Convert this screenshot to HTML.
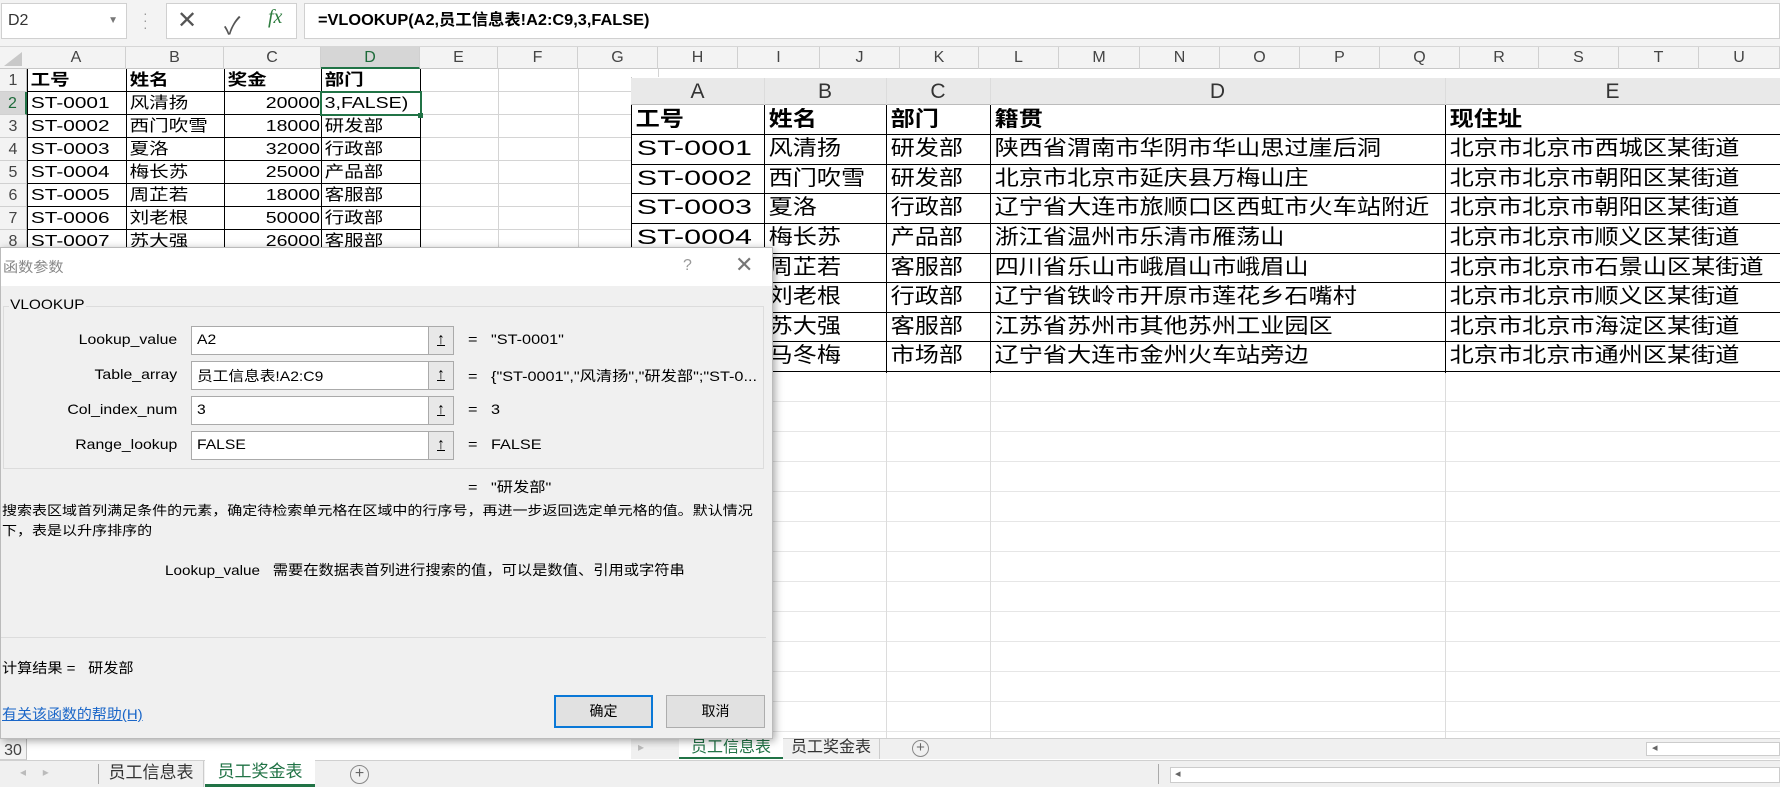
<!DOCTYPE html>
<html><head><meta charset="utf-8">
<style>
*{margin:0;padding:0;box-sizing:border-box}
body{width:1780px;height:787px;overflow:hidden;background:#fff;position:relative;font-family:"Liberation Sans","Noto Sans CJK SC",sans-serif;color:#000}
.a{position:absolute}
.ch{position:absolute;top:47px;height:22px;font-size:16px;color:#444;text-align:center;line-height:22px;border-right:1px solid #d0d0d0}
.vl{position:absolute;width:1px;background:#d4d4d4}
.cell{position:absolute;height:23px;font-size:16px;line-height:23px;padding-left:3px;white-space:nowrap;transform:scaleX(1.22);transform-origin:left}
.cell.l{transform:scaleX(1.3)}
.cell.r{transform-origin:right;text-align:right;padding-left:0}
.rh{position:absolute;left:0;width:27px;height:23px;font-size:16px;color:#444;text-align:center;line-height:23px;background:#f3f3f3;border-bottom:1px solid #d0d0d0;border-right:1px solid #c0c0c0}
.pt{position:absolute;font-size:21px;line-height:29px;padding-left:4px;white-space:nowrap;transform:scaleX(1.15);transform-origin:left}
.pt.l{transform:scaleX(1.45)}
.ph{position:absolute;font-size:21px;line-height:29px;text-align:center;color:#333}
.lbl{position:absolute;right:595px;font-size:14px;white-space:nowrap;transform:scaleX(1.13);transform-origin:right}
.inp{position:absolute;left:190px;width:263px;height:29px;background:#fff;border:1px solid #aaa}
.inp span{position:absolute;left:5px;top:4px;font-size:14px;white-space:nowrap;transform:scaleX(1.12);transform-origin:left}
.inp .b{position:absolute;right:-1px;top:-1px;width:26px;height:29px;border:1px solid #aaa;background:#e8e8e8;text-align:center;font-size:16px;line-height:26px;font-weight:bold;text-decoration:underline}
.eq{position:absolute;left:467px;font-size:14px;white-space:nowrap;transform:scaleX(1.16);transform-origin:left}
.sx{white-space:nowrap;transform:scaleX(1.08);transform-origin:left}
</style></head><body>
<div class="a" style="left:0;top:0;width:1780px;height:47px;background:#f3f3f3;border-bottom:1px solid #d6d6d6"></div>
<div class="a" style="left:1px;top:3px;width:126px;height:36px;background:#fff;border:1px solid #d0d0d0;font-size:16px;line-height:34px;padding-left:6px;color:#333">D2<span style="position:absolute;right:8px;top:0;font-size:10px;color:#777">▼</span></div>
<div class="a" style="left:143px;top:10px;color:#999;font-size:14px;line-height:7px">·<br>·<br>·</div>
<div class="a" style="left:166px;top:3px;width:131px;height:36px;background:#fff;border:1px solid #d0d0d0"></div>
<div class="a" style="left:177px;top:6px;font-size:24px;color:#555">✕</div>
<div class="a" style="left:224px;top:6px;font-size:24px;color:#555">✓</div>
<div class="a" style="left:268px;top:6px;font-size:20px;color:#2f7d40;font-style:italic;font-family:'Liberation Serif',serif">fx</div>
<div class="a" style="left:304px;top:3px;width:1476px;height:36px;background:#fff;border:1px solid #d0d0d0"></div>
<div class="a" style="left:318px;top:4px;font-size:16px;line-height:34px;font-weight:bold;white-space:nowrap;transform:scaleX(1.02);transform-origin:left">=VLOOKUP(A2,员工信息表!A2:C9,3,FALSE)</div>

<div class="a" style="left:0;top:47px;width:1780px;height:22px;background:#f3f3f3;border-bottom:1px solid #c8c8c8"></div>
<div class="a" style="left:4px;top:52px;width:0;height:0;border-left:18px solid transparent;border-bottom:14px solid #c8c8c8"></div>
<div class="ch" style="left:27px;width:99px">A</div>
<div class="ch" style="left:126px;width:98px">B</div>
<div class="ch" style="left:224px;width:97px">C</div>
<div class="ch" style="left:321px;width:99px;background:#d6d6d6;color:#1d6b3a;border-bottom:2px solid #217346">D</div>
<div class="ch" style="left:420px;width:78px">E</div>
<div class="ch" style="left:498px;width:80px">F</div>
<div class="ch" style="left:578px;width:80px">G</div>
<div class="ch" style="left:658px;width:80px">H</div>
<div class="ch" style="left:738px;width:82px">I</div>
<div class="ch" style="left:820px;width:80px">J</div>
<div class="ch" style="left:900px;width:79px">K</div>
<div class="ch" style="left:979px;width:80px">L</div>
<div class="ch" style="left:1059px;width:81px">M</div>
<div class="ch" style="left:1140px;width:80px">N</div>
<div class="ch" style="left:1220px;width:80px">O</div>
<div class="ch" style="left:1300px;width:80px">P</div>
<div class="ch" style="left:1380px;width:80px">Q</div>
<div class="ch" style="left:1460px;width:79px">R</div>
<div class="ch" style="left:1539px;width:80px">S</div>
<div class="ch" style="left:1619px;width:80px">T</div>
<div class="ch" style="left:1699px;width:81px">U</div>

<div class="a" style="left:27px;top:69px;width:1753px;height:670px;background:repeating-linear-gradient(to bottom,transparent 0,transparent 22px,#d4d4d4 22px,#d4d4d4 23px)"></div>
<div class="vl" style="left:126px;top:69px;height:670px"></div>
<div class="vl" style="left:224px;top:69px;height:670px"></div>
<div class="vl" style="left:321px;top:69px;height:670px"></div>
<div class="vl" style="left:420px;top:69px;height:670px"></div>
<div class="vl" style="left:498px;top:69px;height:670px"></div>
<div class="vl" style="left:578px;top:69px;height:670px"></div>
<div class="vl" style="left:658px;top:69px;height:670px"></div>

<div class="rh" style="top:69px">1</div>
<div class="rh" style="top:92px;background:#d6d6d6;color:#1d6b3a;border-right:2px solid #217346">2</div>
<div class="rh" style="top:115px">3</div>
<div class="rh" style="top:138px">4</div>
<div class="rh" style="top:161px">5</div>
<div class="rh" style="top:184px">6</div>
<div class="rh" style="top:207px">7</div>
<div class="rh" style="top:230px">8</div>

<div class="a" style="left:27px;top:69px;width:394px;height:180px;border-left:1px solid #000;background:
linear-gradient(#000,#000) 0 22px/100% 1px no-repeat,linear-gradient(#000,#000) 0 45px/100% 1px no-repeat,linear-gradient(#000,#000) 0 68px/100% 1px no-repeat,linear-gradient(#000,#000) 0 91px/100% 1px no-repeat,linear-gradient(#000,#000) 0 114px/100% 1px no-repeat,linear-gradient(#000,#000) 0 137px/100% 1px no-repeat,linear-gradient(#000,#000) 0 160px/100% 1px no-repeat,
linear-gradient(#000,#000) 98px 0/1px 100% no-repeat,linear-gradient(#000,#000) 196px 0/1px 100% no-repeat,linear-gradient(#000,#000) 293px 0/1px 100% no-repeat,linear-gradient(#000,#000) 392px 0/1px 100% no-repeat,#fff"></div>
<div class="cell" style="left:27px;top:69px;font-weight:bold">工号</div>
<div class="cell" style="left:126px;top:69px;font-weight:bold">姓名</div>
<div class="cell" style="left:224px;top:69px;font-weight:bold">奖金</div>
<div class="cell" style="left:321px;top:69px;font-weight:bold">部门</div>
<div class="cell l" style="left:27px;top:92px">ST-0001</div><div class="cell" style="left:126px;top:92px">风清扬</div><div class="cell r" style="left:224px;top:92px;width:96px">20000</div><div class="cell" style="left:321px;top:92px">3,FALSE)</div>
<div class="cell l" style="left:27px;top:115px">ST-0002</div><div class="cell" style="left:126px;top:115px">西门吹雪</div><div class="cell r" style="left:224px;top:115px;width:96px">18000</div><div class="cell" style="left:321px;top:115px">研发部</div>
<div class="cell l" style="left:27px;top:138px">ST-0003</div><div class="cell" style="left:126px;top:138px">夏洛</div><div class="cell r" style="left:224px;top:138px;width:96px">32000</div><div class="cell" style="left:321px;top:138px">行政部</div>
<div class="cell l" style="left:27px;top:161px">ST-0004</div><div class="cell" style="left:126px;top:161px">梅长苏</div><div class="cell r" style="left:224px;top:161px;width:96px">25000</div><div class="cell" style="left:321px;top:161px">产品部</div>
<div class="cell l" style="left:27px;top:184px">ST-0005</div><div class="cell" style="left:126px;top:184px">周芷若</div><div class="cell r" style="left:224px;top:184px;width:96px">18000</div><div class="cell" style="left:321px;top:184px">客服部</div>
<div class="cell l" style="left:27px;top:207px">ST-0006</div><div class="cell" style="left:126px;top:207px">刘老根</div><div class="cell r" style="left:224px;top:207px;width:96px">50000</div><div class="cell" style="left:321px;top:207px">行政部</div>
<div class="cell l" style="left:27px;top:230px">ST-0007</div><div class="cell" style="left:126px;top:230px">苏大强</div><div class="cell r" style="left:224px;top:230px;width:96px">26000</div><div class="cell" style="left:321px;top:230px">客服部</div>
<div class="a" style="left:320px;top:91px;width:102px;height:25px;border:2px solid #217346"></div>
<div class="a" style="left:418px;top:113px;width:5px;height:5px;background:#217346"></div>

<div class="a" style="left:631px;top:77px;width:1149px;height:662px;background:#fff;border-left:1px solid #c8c8c8"></div>
<div class="a" style="left:631px;top:78px;width:1149px;height:27px;background:#e9e9e9;border-bottom:1px solid #bbb"></div>
<div class="a" style="left:631px;top:372px;width:1149px;height:367px;background:repeating-linear-gradient(to bottom,transparent 0,transparent 29px,#e6e6e6 29px,#e6e6e6 30px)"></div>
<div class="a" style="left:764px;top:78px;width:1px;height:661px;background:#dcdcdc"></div>
<div class="a" style="left:886px;top:78px;width:1px;height:661px;background:#dcdcdc"></div>
<div class="a" style="left:990px;top:78px;width:1px;height:661px;background:#dcdcdc"></div>
<div class="a" style="left:1445px;top:78px;width:1px;height:661px;background:#dcdcdc"></div>
<div class="ph" style="left:631px;top:77px;width:133px">A</div>
<div class="ph" style="left:764px;top:77px;width:122px">B</div>
<div class="ph" style="left:886px;top:77px;width:104px">C</div>
<div class="ph" style="left:990px;top:77px;width:455px">D</div>
<div class="ph" style="left:1445px;top:77px;width:335px">E</div>
<div class="a" style="left:631px;top:105px;width:1149px;height:268px;border-left:1px solid #000;background:
linear-gradient(#000,#000) 0 29px/100% 1px no-repeat,linear-gradient(#000,#000) 0 59px/100% 1px no-repeat,linear-gradient(#000,#000) 0 88px/100% 1px no-repeat,linear-gradient(#000,#000) 0 118px/100% 1px no-repeat,linear-gradient(#000,#000) 0 148px/100% 1px no-repeat,linear-gradient(#000,#000) 0 177px/100% 1px no-repeat,linear-gradient(#000,#000) 0 207px/100% 1px no-repeat,linear-gradient(#000,#000) 0 236px/100% 1px no-repeat,linear-gradient(#000,#000) 0 266px/100% 1px no-repeat,
linear-gradient(#000,#000) 132px 0/1px 100% no-repeat,linear-gradient(#000,#000) 254px 0/1px 100% no-repeat,linear-gradient(#000,#000) 358px 0/1px 100% no-repeat,linear-gradient(#000,#000) 813px 0/1px 100% no-repeat,#fff"></div>
<div class="pt" style="left:631px;top:105px;font-weight:bold">工号</div><div class="pt" style="left:764px;top:105px;font-weight:bold">姓名</div><div class="pt" style="left:886px;top:105px;font-weight:bold">部门</div><div class="pt" style="left:990px;top:105px;font-weight:bold">籍贯</div><div class="pt" style="left:1445px;top:105px;font-weight:bold">现住址</div>
<div class="pt l" style="left:631px;top:134px">ST-0001</div><div class="pt" style="left:764px;top:134px">风清扬</div><div class="pt" style="left:886px;top:134px">研发部</div><div class="pt" style="left:990px;top:134px">陕西省渭南市华阴市华山思过崖后洞</div><div class="pt" style="left:1445px;top:134px">北京市北京市西城区某街道</div>
<div class="pt l" style="left:631px;top:164px">ST-0002</div><div class="pt" style="left:764px;top:164px">西门吹雪</div><div class="pt" style="left:886px;top:164px">研发部</div><div class="pt" style="left:990px;top:164px">北京市北京市延庆县万梅山庄</div><div class="pt" style="left:1445px;top:164px">北京市北京市朝阳区某街道</div>
<div class="pt l" style="left:631px;top:193px">ST-0003</div><div class="pt" style="left:764px;top:193px">夏洛</div><div class="pt" style="left:886px;top:193px">行政部</div><div class="pt" style="left:990px;top:193px">辽宁省大连市旅顺口区西虹市火车站附近</div><div class="pt" style="left:1445px;top:193px">北京市北京市朝阳区某街道</div>
<div class="pt l" style="left:631px;top:223px">ST-0004</div><div class="pt" style="left:764px;top:223px">梅长苏</div><div class="pt" style="left:886px;top:223px">产品部</div><div class="pt" style="left:990px;top:223px">浙江省温州市乐清市雁荡山</div><div class="pt" style="left:1445px;top:223px">北京市北京市顺义区某街道</div>
<div class="pt" style="left:764px;top:253px">周芷若</div><div class="pt" style="left:886px;top:253px">客服部</div><div class="pt" style="left:990px;top:253px">四川省乐山市峨眉山市峨眉山</div><div class="pt" style="left:1445px;top:253px">北京市北京市石景山区某街道</div>
<div class="pt" style="left:764px;top:282px">刘老根</div><div class="pt" style="left:886px;top:282px">行政部</div><div class="pt" style="left:990px;top:282px">辽宁省铁岭市开原市莲花乡石嘴村</div><div class="pt" style="left:1445px;top:282px">北京市北京市顺义区某街道</div>
<div class="pt" style="left:764px;top:312px">苏大强</div><div class="pt" style="left:886px;top:312px">客服部</div><div class="pt" style="left:990px;top:312px">江苏省苏州市其他苏州工业园区</div><div class="pt" style="left:1445px;top:312px">北京市北京市海淀区某街道</div>
<div class="pt" style="left:764px;top:341px">马冬梅</div><div class="pt" style="left:886px;top:341px">市场部</div><div class="pt" style="left:990px;top:341px">辽宁省大连市金州火车站旁边</div><div class="pt" style="left:1445px;top:341px">北京市北京市通州区某街道</div>

<div class="a" style="left:631px;top:738px;width:1149px;height:21px;background:#f0f0f0;border-top:1px solid #d0d0d0"></div>
<div class="a" style="left:638px;top:740px;font-size:12px;color:#bbb">▸</div>
<div class="a" style="left:679px;top:738px;width:104px;height:21px;background:#fff;border-bottom:2px solid #217346;color:#217346;font-size:16px;text-align:center;line-height:19px">员工信息表</div>
<div class="a" style="left:783px;top:738px;width:97px;height:21px;border-right:1px solid #ccc;font-size:16px;text-align:center;line-height:19px;color:#333">员工奖金表</div>
<div class="a" style="left:912px;top:740px;width:17px;height:17px;border:1px solid #888;border-radius:50%;font-size:15px;line-height:14px;text-align:center;color:#666">+</div>
<div class="a" style="left:1646px;top:742px;width:134px;height:14px;background:#fff;border:1px solid #ccc"></div>
<div class="a" style="left:1652px;top:741px;font-size:11px;color:#666">◂</div>

<div class="rh" style="top:739px;height:21px">30</div>

<div class="a" style="left:0;top:760px;width:1780px;height:27px;background:#f0f0f0;border-top:1px solid #d0d0d0"></div>
<div class="a" style="left:20px;top:765px;font-size:12px;color:#bbb">◂&nbsp;&nbsp;&nbsp;&nbsp;&nbsp;▸</div>
<div class="a" style="left:98px;top:764px;width:1px;height:20px;background:#aaa"></div>
<div class="a" style="left:99px;top:761px;width:105px;height:26px;font-size:17px;text-align:center;line-height:24px;color:#333;border-right:1px solid #ccc">员工信息表</div>
<div class="a" style="left:205px;top:760px;width:110px;height:27px;background:#fff;color:#217346;font-size:17px;text-align:center;line-height:24px;border-bottom:3px solid #217346">员工奖金表</div>
<div class="a" style="left:350px;top:765px;width:19px;height:19px;border:1px solid #888;border-radius:50%;font-size:16px;line-height:16px;text-align:center;color:#666">+</div>
<div class="a" style="left:1158px;top:764px;width:1px;height:20px;background:#aaa"></div>
<div class="a" style="left:1170px;top:767px;width:610px;height:16px;background:#fff;border:1px solid #ccc"></div>
<div class="a" style="left:1175px;top:767px;font-size:11px;color:#666">◂</div>

<div class="a" style="left:0;top:247px;width:773px;height:492px;background:#f0f0f0;box-shadow:2px 2px 8px rgba(0,0,0,.35);border:1px solid #bbb">
 <div class="a" style="left:0;top:0;width:771px;height:38px;background:#fff"></div>
 <div class="a sx" style="left:2px;top:9px;font-size:14px;color:#888">函数参数</div>
 <div class="a" style="left:682px;top:9px;font-size:16px;color:#999">?</div>
 <div class="a" style="left:734px;top:4px;font-size:22px;color:#777">✕</div>
 <div class="a" style="left:2px;top:58px;width:761px;height:163px;border:1px solid #dcdcdc"></div>
 <div class="a" style="left:8px;top:48px;font-size:14px;background:#f0f0f0;padding:0 1px;transform:scaleX(1.1);transform-origin:left">VLOOKUP</div>
 <div class="lbl" style="top:83px">Lookup_value</div>
 <div class="lbl" style="top:118px">Table_array</div>
 <div class="lbl" style="top:153px">Col_index_num</div>
 <div class="lbl" style="top:188px">Range_lookup</div>
 <div class="inp" style="top:78px"><span>A2</span><div class="b">↑</div></div>
 <div class="inp" style="top:113px"><span>员工信息表!A2:C9</span><div class="b">↑</div></div>
 <div class="inp" style="top:148px"><span>3</span><div class="b">↑</div></div>
 <div class="inp" style="top:183px"><span>FALSE</span><div class="b">↑</div></div>
 <div class="eq" style="top:83px">=&nbsp;&nbsp;&nbsp;"ST-0001"</div>
 <div class="eq" style="top:118px">=&nbsp;&nbsp;&nbsp;{"ST-0001","风清扬","研发部";"ST-0...</div>
 <div class="eq" style="top:153px">=&nbsp;&nbsp;&nbsp;3</div>
 <div class="eq" style="top:188px">=&nbsp;&nbsp;&nbsp;FALSE</div>
 <div class="eq" style="top:229px">=&nbsp;&nbsp;&nbsp;"研发部"</div>
 <div class="a" style="left:1px;top:253px;font-size:13px;line-height:20px;white-space:nowrap;transform:scaleX(1.155);transform-origin:left">搜索表区域首列满足条件的元素，确定待检索单元格在区域中的行序号，再进一步返回选定单元格的值。默认情况<br>下，表是以升序排序的</div>
 <div class="a" style="left:164px;top:312px;font-size:14px;white-space:nowrap;transform:scaleX(1.09);transform-origin:left">Lookup_value&nbsp;&nbsp;&nbsp;需要在数据表首列进行搜索的值，可以是数值、引用或字符串</div>
 <div class="a" style="left:0;top:389px;width:765px;height:1px;background:#dcdcdc"></div>
 <div class="a sx" style="left:1px;top:410px;font-size:14px">计算结果 =&nbsp;&nbsp;&nbsp;研发部</div>
 <div class="a" style="left:1px;top:456px;font-size:14px;color:#1a66c8;text-decoration:underline;white-space:nowrap;transform:scaleX(1.07);transform-origin:left">有关该函数的帮助(H)</div>
 <div class="a" style="left:553px;top:447px;width:99px;height:33px;background:#e1e1e1;border:2px solid #0a78d7;font-size:14px;text-align:center;line-height:29px">确定</div>
 <div class="a" style="left:665px;top:447px;width:99px;height:33px;background:#e1e1e1;border:1px solid #adadad;font-size:14px;text-align:center;line-height:31px">取消</div>
</div>
</body></html>
